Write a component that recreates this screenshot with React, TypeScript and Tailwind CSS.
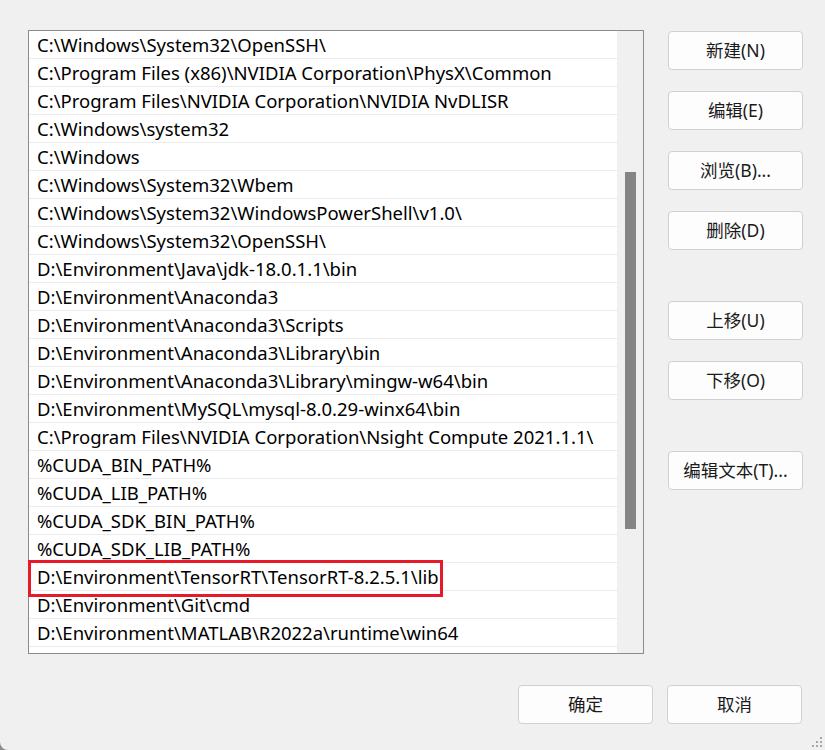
import React from 'react';

const PATHS = [
  'C:\\Windows\\System32\\OpenSSH\\',
  'C:\\Program Files (x86)\\NVIDIA Corporation\\PhysX\\Common',
  'C:\\Program Files\\NVIDIA Corporation\\NVIDIA NvDLISR',
  'C:\\Windows\\system32',
  'C:\\Windows',
  'C:\\Windows\\System32\\Wbem',
  'C:\\Windows\\System32\\WindowsPowerShell\\v1.0\\',
  'C:\\Windows\\System32\\OpenSSH\\',
  'D:\\Environment\\Java\\jdk-18.0.1.1\\bin',
  'D:\\Environment\\Anaconda3',
  'D:\\Environment\\Anaconda3\\Scripts',
  'D:\\Environment\\Anaconda3\\Library\\bin',
  'D:\\Environment\\Anaconda3\\Library\\mingw-w64\\bin',
  'D:\\Environment\\MySQL\\mysql-8.0.29-winx64\\bin',
  'C:\\Program Files\\NVIDIA Corporation\\Nsight Compute 2021.1.1\\',
  '%CUDA_BIN_PATH%',
  '%CUDA_LIB_PATH%',
  '%CUDA_SDK_BIN_PATH%',
  '%CUDA_SDK_LIB_PATH%',
  'D:\\Environment\\TensorRT\\TensorRT-8.2.5.1\\lib',
  'D:\\Environment\\Git\\cmd',
  'D:\\Environment\\MATLAB\\R2022a\\runtime\\win64',
];

function DialogButton({ label, className = '' }: { label: string; className?: string }) {
  return (
    <button
      type="button"
      className={`flex h-[39px] w-[135px] items-center justify-center rounded-[4px] border border-[#d0d0d0] bg-[#fdfdfd] text-[17.5px] text-[#1a1a1a] ${className}`}
    >
      {label}
    </button>
  );
}

export default function App() {
  return (
    <div className="h-[750px] w-[825px] bg-[#8c8c8c]">
      <div
        className="relative flex h-[750px] w-[825px] flex-col rounded-bl-[8px] bg-[#f0f0f0]"
        style={{ fontFamily: '"Noto Sans", "Noto Sans CJK SC", sans-serif' }}
      >
        <div className="flex gap-[24px] pl-[28px] pt-[30px]">
          {/* path list */}
          <div className="relative flex h-[624px] w-[616px] border border-[#8a8a92] bg-white">
            <ul className="flex-1">
              {PATHS.map((p, i) => (
                <li
                  key={i}
                  className="flex h-[28px] items-center whitespace-nowrap border-b border-[#ebebeb] pl-[8px] pt-[2px] text-[18.5px] leading-none text-black"
                >
                  {p}
                </li>
              ))}
            </ul>
            <div className="flex w-[26px] justify-center bg-[#f0f0f0] pt-[141px]">
              <div className="h-[357px] w-[11px] bg-[#858585]" />
            </div>
            {/* annotation box */}
            <div className="pointer-events-none absolute left-[-1px] top-[529px] h-[37px] w-[415px] border-[3px] border-[#e81a2a]" />
          </div>

          {/* side buttons */}
          <div className="flex flex-col pt-[1px]">
            <DialogButton label="新建(N)" />
            <DialogButton label="编辑(E)" className="mt-[21px]" />
            <DialogButton label="浏览(B)..." className="mt-[21px]" />
            <DialogButton label="删除(D)" className="mt-[21px]" />
            <DialogButton label="上移(U)" className="mt-[51px]" />
            <DialogButton label="下移(O)" className="mt-[21px]" />
            <DialogButton label="编辑文本(T)..." className="mt-[51px]" />
          </div>
        </div>

        <div className="flex justify-end gap-[14px] pr-[23px] pt-[31px]">
          <DialogButton label="确定" />
          <DialogButton label="取消" />
        </div>

        <svg className="absolute bottom-[2px] right-[2px]" width="12" height="12" viewBox="0 0 12 12">
          <g fill="#a8a8a8">
            <rect x="9" y="1" width="2" height="2" />
            <rect x="5" y="5" width="2" height="2" />
            <rect x="9" y="5" width="2" height="2" />
            <rect x="1" y="9" width="2" height="2" />
            <rect x="5" y="9" width="2" height="2" />
            <rect x="9" y="9" width="2" height="2" />
          </g>
        </svg>
      </div>
    </div>
  );
}
